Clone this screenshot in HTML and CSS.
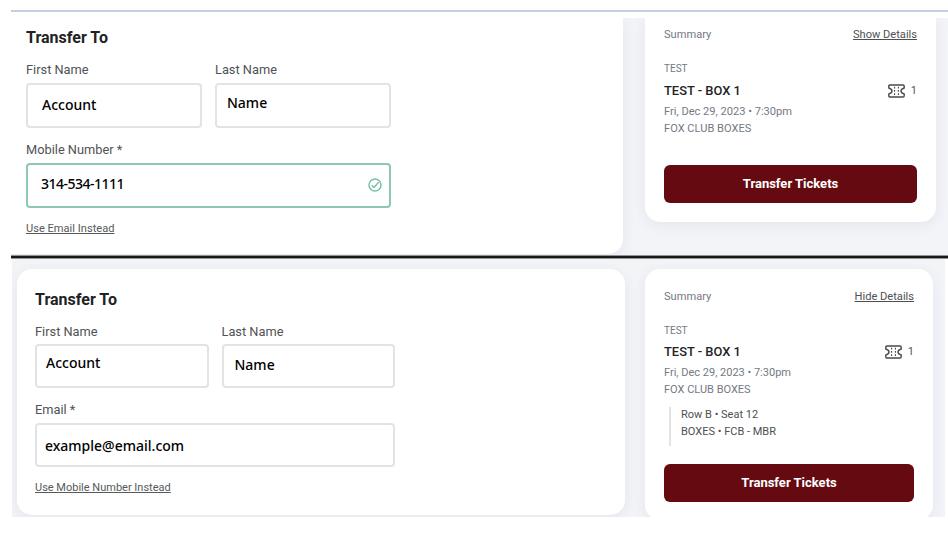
FILE: index.html
```html
<!DOCTYPE html>
<html lang="en">
<head>
  <meta charset="utf-8">
  <title>Transfer Tickets</title>
  <link rel="stylesheet" href="styles.css">
</head>
<body>
<div class="top-line"></div>

<section class="panel panel-mobile">
  <div class="card form-card">
    <h2>Transfer To</h2>
    <div class="names">
      <div class="field">
        <div class="label">First Name</div>
        <div class="input first">Account</div>
      </div>
      <div class="field">
        <div class="label">Last Name</div>
        <div class="input last">Name</div>
      </div>
    </div>
    <div class="field contact">
      <div class="label">Mobile Number *</div>
      <div class="input valid">
        <span class="phone">314-534-1111</span>
        <svg class="check" viewBox="0 0 14 14" fill="none" stroke="#7abfa6" stroke-width="1.5">
          <circle cx="7" cy="7" r="6"/>
          <path d="M3.7 7.3 6 9.4 10.6 4.2"/>
        </svg>
      </div>
    </div>
    <a class="switch">Use Email Instead</a>
  </div>

  <div class="card summary-card">
    <div class="row">
      <span class="summary">Summary</span>
      <a class="details">Show Details</a>
    </div>
    <div class="category">TEST</div>
    <div class="row event">
      <h3>TEST - BOX 1</h3>
      <div class="count">
        <svg class="ticket" viewBox="0 0 17 14" fill="none" stroke="#4a4a4a" stroke-width="1.4" stroke-linejoin="round">
          <path d="M2 1H15Q16.2 1 16.2 2.2V4Q13 5 13 7T16.2 10V11.8Q16.2 13 15 13H2Q.8 13 .8 11.8V10Q4 9 4 7T.8 4V2.2Q.8 1 2 1Z"/>
          <path d="M6.6 2.8V11.2M10.4 2.8V11.2" stroke-width="1.1" stroke-dasharray="1.8 1.4"/>
        </svg>
        <span>1</span>
      </div>
    </div>
    <div class="info">Fri, Dec 29, 2023 • 7:30pm</div>
    <div class="info">FOX CLUB BOXES</div>
    <div class="button">Transfer Tickets</div>
  </div>
</section>

<div class="divider"></div>

<section class="panel panel-email">
  <div class="card form-card">
    <h2>Transfer To</h2>
    <div class="names">
      <div class="field">
        <div class="label">First Name</div>
        <div class="input first">Account</div>
      </div>
      <div class="field">
        <div class="label">Last Name</div>
        <div class="input last">Name</div>
      </div>
    </div>
    <div class="field contact">
      <div class="label">Email *</div>
      <div class="input email">example@email.com</div>
    </div>
    <a class="switch">Use Mobile Number Instead</a>
  </div>

  <div class="card summary-card">
    <div class="row">
      <span class="summary">Summary</span>
      <a class="details">Hide Details</a>
    </div>
    <div class="category">TEST</div>
    <div class="row event">
      <h3>TEST - BOX 1</h3>
      <div class="count">
        <svg class="ticket" viewBox="0 0 17 14" fill="none" stroke="#4a4a4a" stroke-width="1.4" stroke-linejoin="round">
          <path d="M2 1H15Q16.2 1 16.2 2.2V4Q13 5 13 7T16.2 10V11.8Q16.2 13 15 13H2Q.8 13 .8 11.8V10Q4 9 4 7T.8 4V2.2Q.8 1 2 1Z"/>
          <path d="M6.6 2.8V11.2M10.4 2.8V11.2" stroke-width="1.1" stroke-dasharray="1.8 1.4"/>
        </svg>
        <span>1</span>
      </div>
    </div>
    <div class="info">Fri, Dec 29, 2023 • 7:30pm</div>
    <div class="info">FOX CLUB BOXES</div>
    <div class="seats">
      <div>Row B • Seat 12</div>
      <div>BOXES • FCB - MBR</div>
    </div>
    <div class="button">Transfer Tickets</div>
  </div>
</section>
</body>
</html>
```

FILE: styles.css
```css
* {
    box-sizing: border-box;
}

body {
    background-color: #ffffff;
    font-family: Roboto, "Liberation Sans", sans-serif;
    margin: 0;
    padding: 10px 0 0 11px;
    height: 538px;
    overflow: hidden;
}

.top-line {
    height: 2px;
    background-color: #c3d0e4;
}

.panel {
    display: flex;
    align-items: flex-start;
    background-color: #f3f4f8;
    overflow: hidden;
}

.panel-mobile {
    height: 237px;
    margin-top: 6px;
}

.panel-email {
    width: 933px;
    height: 258px;
    margin-left: 1px;
    padding: 10px 0 0 5px;
}

.divider {
    height: 4px;
    background-color: #161a18;
    border-top: 1px solid #8f9391;
    border-bottom: 1px solid #8f9391;
}

.card {
    background-color: #ffffff;
    border-radius: 15px;
    box-shadow: 0 3px 14px rgba(60, 60, 100, 0.08);
}

.panel-mobile .form-card {
    width: 612px;
    height: 236px;
    padding: 10px 15px;
    border-radius: 0 0 15px 0;
}

.panel-email .form-card {
    width: 608px;
    height: 246px;
    padding: 21px 18px;
}

.panel-mobile .summary-card {
    width: 291px;
    height: 204px;
    margin-left: 22px;
    padding: 10px 19px;
    border-radius: 0 0 15px 15px;
}

.panel-email .summary-card {
    width: 288px;
    height: 251px;
    margin-left: 20px;
    padding: 21px 19px;
}

h2 {
    color: #1e2325;
    font-size: 16px;
    font-weight: bold;
    line-height: 20px;
    margin: 0 0 14px;
}

.names {
    display: flex;
    gap: 13px;
    width: 365px;
}

.names .field {
    flex: 1;
}

.label {
    color: #505355;
    font-size: 12.8px;
    line-height: 16px;
    margin-bottom: 5px;
}

.input {
    display: flex;
    justify-content: space-between;
    align-items: center;
    height: 45px;
    border: 2px solid #e2e3e4;
    border-radius: 4px;
    color: #000000;
    font-family: "Noto Sans", sans-serif;
    font-size: 14px;
    font-weight: 500;
    padding: 0 9px 2px 14px;
}

.panel-mobile .last {
    padding: 0 10px 6px;
}

.valid {
    border-color: #8cc8b2;
    padding: 0 7px 4px 13px;
}

.phone {
    letter-spacing: -0.5px;
}

.check {
    width: 14px;
    height: 14px;
    margin-top: 2px;
}

.contact {
    width: 365px;
    margin-top: 14px;
}

.switch {
    display: block;
    color: #555a5a;
    font-size: 11.1px;
    line-height: 14px;
    margin-top: 14px;
    text-decoration: underline;
}

.panel-email .names,
.panel-email .contact {
    width: 360px;
}

.panel-email .names .label {
    margin-bottom: 4px;
}

.panel-email .switch {
    font-size: 11px;
}

.panel-email .input {
    height: 44px;
}

.panel-email .first {
    padding: 0 9px 7px;
}

.panel-email .last {
    padding: 0 11px 3px;
}

.panel-email .email {
    padding: 0 8px;
}

.row {
    display: flex;
    justify-content: space-between;
    align-items: center;
}

.summary,
.details {
    color: #747982;
    font-size: 11.1px;
    line-height: 14px;
}

.details {
    color: #4d5052;
    text-decoration: underline;
}

.category {
    color: #747982;
    font-size: 10px;
    line-height: 12px;
    margin-top: 21px;
}

.event {
    margin-top: 8px;
}

h3 {
    color: #1e2325;
    font-size: 12.9px;
    font-weight: 500;
    line-height: 16px;
    margin: 0;
}

.count {
    display: flex;
    align-items: center;
    gap: 6px;
    color: #555555;
    font-size: 11px;
    line-height: 14px;
}

.ticket {
    width: 17px;
    height: 14px;
}

.info {
    color: #747982;
    font-size: 11.1px;
    line-height: 17px;
}

.event + .info {
    margin-top: 4px;
}

.button {
    height: 38px;
    margin-top: 28px;
    background-color: #650a10;
    border-radius: 6px;
    color: #ffffff;
    font-size: 13px;
    font-weight: bold;
    line-height: 38px;
    text-align: center;
}

.panel-email .event {
    margin-top: 7px;
}

.panel-email .info {
    font-size: 11px;
    line-height: 16.5px;
}

.panel-email .event + .info {
    margin-top: 5px;
}

.seats {
    height: 39px;
    margin: 9px 0 0 5px;
    padding-left: 10px;
    border-left: 2px solid #e3e4e7;
    color: #4d5052;
    font-size: 11px;
    line-height: 16.5px;
}

.seats + .button {
    margin-top: 18px;
}
```
